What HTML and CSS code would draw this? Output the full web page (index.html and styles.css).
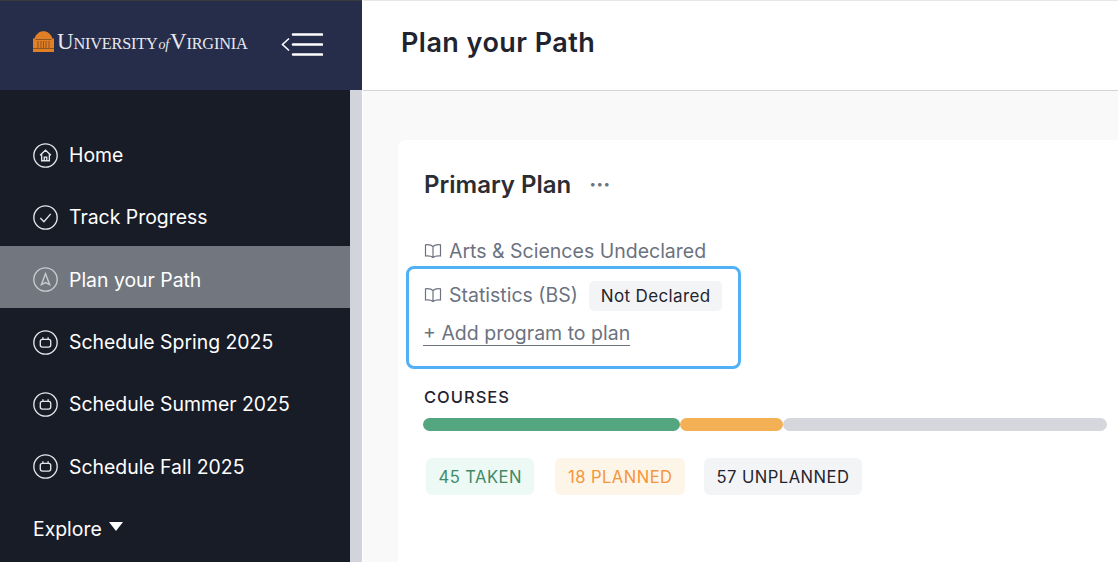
FILE: index.html
```html
<!DOCTYPE html>
<html lang="en">
<head>
  <meta charset="UTF-8">
  <meta name="viewport" content="width=device-width, initial-scale=1.0">
  <title>Plan your Path</title>
  <link rel="stylesheet" href="styles.css">
</head>
<body>
  <div class="sidebar-wrap">
    <aside class="sidebar">
      <div class="brand">
        <svg class="logo-dome" viewBox="0 0 21 21" aria-hidden="true">
          <path d="M0 21V7.5h1.5C3 3 6.500 .3 10.500 .3S18 3 19.500 7.500H21V21Z" fill="#e07f25"/>
          <path d="M2.500 8.500h16M0 17.500h21M5 10v7M8 10v7M10.500 10v7M13 10v7M16 10v7" stroke="#7a4a20" stroke-width=".8" fill="none"/>
        </svg>
        <span class="logo-text"><span class="cap">U</span>NIVERSITY<i class="of">of</i><span class="cap">V</span>IRGINIA</span>
        <svg class="menu-icon" viewBox="0 0 42 23" aria-hidden="true">
          <path d="M12 1.500H41M12 11.500H41M12 21.500H41" stroke="#fff" stroke-width="2.600" stroke-linecap="round" fill="none"/>
          <path d="M8 5.500L1.500 11.500L8 17.500" stroke="#fff" stroke-width="1.600" fill="none"/>
        </svg>
      </div>

      <nav class="nav">
        <a class="nav-item">
          <svg class="nav-icon" viewBox="0 0 24 24"><circle cx="12" cy="12" r="11.200"/><path d="M6.800 11.800L12 7l5.200 4.800M8.300 10.500V17h7.400V10.500M10.800 17v-3.500h2.400V17"/></svg>
          Home
        </a>
        <a class="nav-item">
          <svg class="nav-icon" viewBox="0 0 24 24"><circle cx="12" cy="12" r="11.200"/><path d="M7 12.500l3.500 3.500 6.500-7.500"/></svg>
          Track Progress
        </a>
        <a class="nav-item active">
          <svg class="nav-icon" viewBox="0 0 24 24"><circle cx="12" cy="12" r="11.200"/><path d="M8 17L12 6.500L16 17L12 15Z"/></svg>
          Plan your Path
        </a>
        <a class="nav-item">
          <svg class="nav-icon" viewBox="0 0 24 24"><circle cx="12" cy="12" r="11.200"/><rect x="7" y="9" width="10" height="7.500" rx="2"/><path d="M9.500 7v2M14.500 7v2"/></svg>
          Schedule Spring 2025
        </a>
        <a class="nav-item">
          <svg class="nav-icon" viewBox="0 0 24 24"><circle cx="12" cy="12" r="11.200"/><rect x="7" y="9" width="10" height="7.500" rx="2"/><path d="M9.500 7v2M14.500 7v2"/></svg>
          Schedule Summer 2025
        </a>
        <a class="nav-item">
          <svg class="nav-icon" viewBox="0 0 24 24"><circle cx="12" cy="12" r="11.200"/><rect x="7" y="9" width="10" height="7.500" rx="2"/><path d="M9.500 7v2M14.500 7v2"/></svg>
          Schedule Fall 2025
        </a>
        <a class="nav-explore">Explore <span class="caret"></span></a>
      </nav>
    </aside>
    <div class="scroll-track"></div>
  </div>

  <main class="main">
    <header class="page-header">
      <h1>Plan your Path</h1>
    </header>

    <div class="content">
      <section class="card">
        <div class="card-title">
          <h2>Primary Plan</h2>
          <span class="dots">···</span>
        </div>

        <div class="program first">
          <svg class="book" viewBox="0 0 18 16"><path d="M9 3.500C7.500 2 5 1.500 1.500 1.800V13c3.500-.3 6 .2 7.500 1.500 1.500-1.300 4-1.800 7.500-1.500V1.800C13 1.500 10.500 2 9 3.500ZM9 3.500V14.500"/></svg>
          Arts &amp; Sciences Undeclared
        </div>

        <div class="highlight">
          <div class="program">
            <svg class="book" viewBox="0 0 18 16"><path d="M9 3.500C7.500 2 5 1.500 1.500 1.800V13c3.500-.3 6 .2 7.500 1.500 1.500-1.300 4-1.800 7.500-1.500V1.800C13 1.500 10.500 2 9 3.500ZM9 3.500V14.500"/></svg>
            Statistics (BS)
            <span class="badge">Not Declared</span>
          </div>
          <a class="add-program">+ Add program to plan</a>
        </div>

        <div class="courses-label">COURSES</div>
        <div class="progress">
          <div class="bar bar-taken"></div>
          <div class="bar bar-planned"></div>
          <div class="bar bar-unplanned"></div>
        </div>

        <div class="tags">
          <span class="tag tag-taken">45 TAKEN</span>
          <span class="tag tag-planned">18 PLANNED</span>
          <span class="tag tag-unplanned">57 UNPLANNED</span>
        </div>
      </section>
    </div>
  </main>
</body>
</html>
```

FILE: styles.css
```css
* {
  box-sizing: border-box;
}
html, body {
  height: 100%;
}
body {
  margin: 0;
  display: flex;
  height: 562px;
  overflow: hidden;
  font-family: Inter, "Liberation Sans", sans-serif;
  background-color: #f9f9f9;
}
.sidebar-wrap {
  display: flex;
  width: 363px;
  flex-shrink: 0;
  background-color: #fff;
}
.sidebar {
  width: 350px;
  background-color: #181c27;
  color: #fff;
  flex-shrink: 0;
}
.scroll-track {
  width: 12px;
  margin-top: 90px;
  background-color: #d1d5db;
}
.brand {
  width: 362px;
  height: 90px;
  background-color: #252d4b;
  border-top: 1px solid #3a3a3c;
  display: flex;
  align-items: center;
  padding-left: 33px;
  padding-bottom: 3px;
}
.logo-dome {
  width: 21px;
  height: 21px;
  margin-bottom: 5px;
}
.logo-text {
  margin: 0 0 4px 3px;
  font-family: "Liberation Serif", serif;
  font-size: 16.300px;
  letter-spacing: -.2px;
  color: #e8e9ee;
  white-space: nowrap;
  width: 189px;
}
.logo-text .cap {
  font-size: 23px;
}
.logo-text .of {
  font-size: 14px;
  margin: 0 1px;
}
.menu-icon {
  width: 42px;
  height: 23px;
  margin-left: 35px;
}
.nav {
  padding-top: 31px;
}
.nav-item {
  display: flex;
  align-items: center;
  height: 62.3px;
  padding: 6px 0 0 33px;
  font-size: 19.400px;
  color: #fff;
}
.nav-item.active {
  background-color: #72777f;
}
.nav-icon {
  width: 25px;
  height: 25px;
  margin-right: 11px;
  fill: none;
  stroke: #e5e7eb;
  stroke-width: 1.300;
}
.active .nav-icon {
  stroke: #c9ccd1;
}
.nav-explore {
  display: flex;
  align-items: center;
  height: 62.3px;
  padding: 6px 0 0 33px;
  font-size: 19.400px;
  color: #fff;
}
.caret {
  width: 0;
  height: 0;
  margin-left: 7px;
  margin-bottom: 5px;
  border-left: 7px solid transparent;
  border-right: 7px solid transparent;
  border-top: 9px solid #fff;
}
.main {
  flex: 1;
  min-width: 0;
}
.page-header {
  height: 91px;
  background-color: #fff;
  border-top: 1px solid #e5e7eb;
  border-bottom: 1px solid #d4d4d6;
  display: flex;
  align-items: center;
  padding-left: 38px;
}
.page-header h1 {
  margin: 0 0 7px;
  font-size: 27px;
  font-weight: 600;
  letter-spacing: .45px;
  color: #1f2430;
}
.content {
  padding: 49px 0 0 35px;
}
.card {
  background-color: #fff;
  border-radius: 8px 0 0 0;
  height: 440px;
  padding: 26px 0 0 26px;
  width: 720px;
}
.card-title {
  display: flex;
  align-items: center;
  height: 36px;
}
.card-title h2 {
  margin: 0;
  font-size: 24px;
  font-weight: 600;
  color: #2b2d33;
}
.dots {
  margin-left: 18px;
  font-size: 21px;
  font-weight: 700;
  color: #6b7280;
}
.program {
  display: flex;
  align-items: center;
  font-size: 19.500px;
  color: #6b7280;
}
.program.first {
  margin-top: 34px;
  height: 30px;
}
.book {
  width: 18px;
  height: 16px;
  margin-right: 7px;
  fill: none;
  stroke: #6b7280;
  stroke-width: 1.200;
}
.highlight {
  width: 335px;
  height: 103px;
  margin: 0 0 0 -18px;
  padding: 10px 14px 0 15px;
  border: 3.500px solid #52b0f7;
  border-radius: 8px;
}
.badge {
  margin: 2px 0 0 11px;
  padding: 0 12px;
  height: 30px;
  display: inline-flex;
  align-items: center;
  background-color: #f3f4f6;
  border-radius: 5px;
  font-size: 17px;
  letter-spacing: .35px;
  color: #1f2430;
}
.add-program {
  display: inline-block;
  margin: 11px 0 0 -1px;
  font-size: 19.500px;
  line-height: 23px;
  color: #6b7280;
  border-bottom: 1px solid #6b7280;
}
.courses-label {
  margin-top: 18px;
  font-size: 16.500px;
  font-weight: 500;
  letter-spacing: 1px;
  color: #1f2430;
}
.progress {
  display: flex;
  width: 684px;
  height: 13px;
  margin: 11px 0 0 -1px;
}
.bar {
  height: 13px;
  border-radius: 7px;
}
.bar-taken {
  width: 256.500px;
  background-color: #54a681;
}
.bar-planned {
  width: 103px;
  background-color: #f4b055;
}
.bar-unplanned {
  flex: 1;
  background-color: #d5d7dc;
}
.tags {
  display: flex;
  margin-top: 27px;
  margin-left: 2px;
}
.tag {
  height: 37px;
  display: flex;
  align-items: center;
  padding: 0 12.500px;
  border-radius: 6px;
  font-size: 16.600px;
  letter-spacing: .45px;
}
.tag-taken {
  background-color: #ecf9f4;
  color: #3f8a68;
}
.tag-planned {
  margin-left: 21px;
  background-color: #fdf5e8;
  color: #f5963a;
}
.tag-unplanned {
  margin-left: 19px;
  background-color: #f3f4f6;
  color: #1f2430;
}
```
